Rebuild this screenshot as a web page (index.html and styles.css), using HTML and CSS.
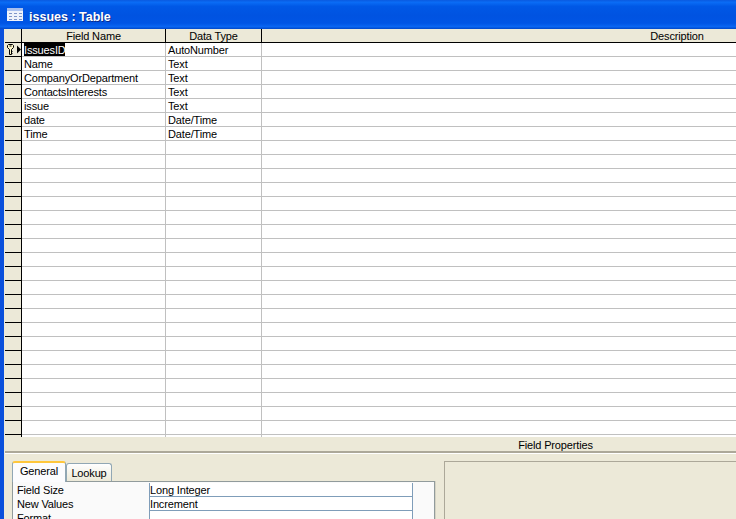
FILE: index.html
```html
<!DOCTYPE html>
<html lang="en">
<head>
<meta charset="utf-8">
<title>issues : Table</title>
<link rel="stylesheet" href="styles.css">
</head>
<body>
<div class="window">
  <div class="titlebar">
    <svg class="table-icon" width="16" height="13" viewBox="0 0 16 13">
      <rect width="16" height="13" fill="#eef2fb"/>
      <rect width="16" height="3" fill="#a9c0ee"/>
      <path d="M2 5h3v1H2zM7 5h3v1H7zM12 5h3v1h-3zM2 8h3v1H2zM7 8h3v1H7zM12 8h3v1h-3zM2 11h3v1H2zM7 11h3v1H7zM12 11h3v1h-3z" fill="#7f95c8"/>
    </svg>
    <span class="title">issues : Table</span>
  </div>
  <div class="client">
    <div class="grid-area">
      <div class="row head">
        <div class="sel"></div>
        <div class="c name">Field Name</div>
        <div class="c type">Data Type</div>
        <div class="c desc">Description</div>
      </div>
      <div class="row first">
        <div class="sel">
          <svg width="16" height="13" viewBox="0 0 16 13">
            <path d="M3.500 1.500h4l1 1v2l-2 2v5h-2v-5l-2-2v-2z" fill="#fdf6c8" stroke="#000"/>
            <path d="M4.500 3h2" stroke="#000" fill="none"/>
            <path d="M6.500 8.500h1M6.500 10.500h1" stroke="#000" fill="none"/>
            <path d="M12 2.500l4 4-4 4z" fill="#000"/>
          </svg>
        </div>
        <div class="c name"><span class="hl">IssuesID</span></div>
        <div class="c type">AutoNumber</div>
        <div class="c desc"></div>
      </div>
      <div class="row"><div class="sel"></div><div class="c name">Name</div><div class="c type">Text</div><div class="c desc"></div></div>
      <div class="row"><div class="sel"></div><div class="c name">CompanyOrDepartment</div><div class="c type">Text</div><div class="c desc"></div></div>
      <div class="row"><div class="sel"></div><div class="c name">ContactsInterests</div><div class="c type">Text</div><div class="c desc"></div></div>
      <div class="row"><div class="sel"></div><div class="c name">issue</div><div class="c type">Text</div><div class="c desc"></div></div>
      <div class="row"><div class="sel"></div><div class="c name">date</div><div class="c type">Date/Time</div><div class="c desc"></div></div>
      <div class="row"><div class="sel"></div><div class="c name">Time</div><div class="c type">Date/Time</div><div class="c desc"></div></div>
      <div class="row"><div class="sel"></div><div class="c name"></div><div class="c type"></div><div class="c desc"></div></div>
      <div class="row"><div class="sel"></div><div class="c name"></div><div class="c type"></div><div class="c desc"></div></div>
      <div class="row"><div class="sel"></div><div class="c name"></div><div class="c type"></div><div class="c desc"></div></div>
      <div class="row"><div class="sel"></div><div class="c name"></div><div class="c type"></div><div class="c desc"></div></div>
      <div class="row"><div class="sel"></div><div class="c name"></div><div class="c type"></div><div class="c desc"></div></div>
      <div class="row"><div class="sel"></div><div class="c name"></div><div class="c type"></div><div class="c desc"></div></div>
      <div class="row"><div class="sel"></div><div class="c name"></div><div class="c type"></div><div class="c desc"></div></div>
      <div class="row"><div class="sel"></div><div class="c name"></div><div class="c type"></div><div class="c desc"></div></div>
      <div class="row"><div class="sel"></div><div class="c name"></div><div class="c type"></div><div class="c desc"></div></div>
      <div class="row"><div class="sel"></div><div class="c name"></div><div class="c type"></div><div class="c desc"></div></div>
      <div class="row"><div class="sel"></div><div class="c name"></div><div class="c type"></div><div class="c desc"></div></div>
      <div class="row"><div class="sel"></div><div class="c name"></div><div class="c type"></div><div class="c desc"></div></div>
      <div class="row"><div class="sel"></div><div class="c name"></div><div class="c type"></div><div class="c desc"></div></div>
      <div class="row"><div class="sel"></div><div class="c name"></div><div class="c type"></div><div class="c desc"></div></div>
      <div class="row"><div class="sel"></div><div class="c name"></div><div class="c type"></div><div class="c desc"></div></div>
      <div class="row"><div class="sel"></div><div class="c name"></div><div class="c type"></div><div class="c desc"></div></div>
      <div class="row"><div class="sel"></div><div class="c name"></div><div class="c type"></div><div class="c desc"></div></div>
      <div class="row"><div class="sel"></div><div class="c name"></div><div class="c type"></div><div class="c desc"></div></div>
      <div class="row"><div class="sel"></div><div class="c name"></div><div class="c type"></div><div class="c desc"></div></div>
      <div class="row"><div class="sel"></div><div class="c name"></div><div class="c type"></div><div class="c desc"></div></div>
      <div class="row"><div class="sel"></div><div class="c name"></div><div class="c type"></div><div class="c desc"></div></div>
      <div class="row last"><div class="sel"></div><div class="c name"></div><div class="c type"></div><div class="c desc"></div></div>
    </div>
    <div class="props-head">Field Properties</div>
    <div class="props">
      <div class="tabs-wrap">
        <div class="tabs">
          <div class="tab active">General</div>
          <div class="tab">Lookup</div>
        </div>
        <div class="panel">
          <div class="prow"><div class="plabel">Field Size</div><div class="pval">Long Integer</div><div class="pedge"></div></div>
          <div class="prow"><div class="plabel">New Values</div><div class="pval">Increment</div><div class="pedge"></div></div>
          <div class="prow"><div class="plabel">Format</div><div class="pval"></div><div class="pedge"></div></div>
        </div>
      </div>
      <div class="help"></div>
    </div>
  </div>
</div>
</body>
</html>
```
FILE: styles.css
```css
* { box-sizing: border-box; }
html, body { margin: 0; padding: 0; }
body {
  width: 736px;
  height: 519px;
  overflow: hidden;
  font-family: "Liberation Sans", Arial, sans-serif;
  font-size: 11px;
  letter-spacing: -0.15px;
  color: #000;
  background: #ece9d8;
}
.window { width: 736px; height: 519px; display: flex; flex-direction: column; overflow: hidden; }
.titlebar {
  height: 29px;
  flex: none;
  display: flex;
  align-items: center;
  gap: 6px;
  padding: 0 0 0 7px;
  background: linear-gradient(180deg, #0a5ae0 0%, #0a6cf5 8%, #0058e6 22%, #0053e1 55%, #0055e5 80%, #0a66f2 92%, #0047c8 100%);
}
.table-icon { flex: none; }
.title {
  color: #fff;
  font-weight: 700;
  font-size: 12.500px;
  letter-spacing: 0;
  margin-top: 4px;
  text-shadow: 1px 1px 0 #0a2a8c;
}
.client { flex: 1; min-height: 0; border-left: 4px solid #0a50dc; padding-left: 1px; background: #ece9d8; display: flex; flex-direction: column; }
.grid-area { height: 408px; flex: none; overflow: hidden; }
.row { display: flex; height: 14px; background: #fff; }
.sel { width: 17px; flex: none; background: #ece9d8; border-right: 1px solid #000; border-bottom: 1px solid #000; height: 14px; line-height: 0; }
.c { height: 14px; line-height: 13px; padding-top: 1px; border-bottom: 1px solid #c0c0c0; border-right: 1px solid #c0c0c0; padding-left: 2px; white-space: nowrap; overflow: hidden; }
.name { width: 144px; flex: none; }
.type { width: 96px; flex: none; }
.desc { flex: 1; border-right: 0; }
.head .c, .head .sel { background: #ece9d8; border-bottom: 1px solid #000; border-right: 1px solid #000; text-align: center; padding-left: 0; }
.head .desc { border-right: 0; padding-left: 356px; }
.hl { background: #000; color: #fff; display: block; width: 41px; height: 13px; margin-top: -1px; padding-top: 1px; line-height: 12px; }
.last .sel { border-bottom: 0; }
.last .c { border-bottom: 0; }
.props-head { height: 16px; flex: none; text-align: center; line-height: 16px; padding-left: 370px; border-bottom: 2px solid #aca899; }
.props { flex: 1; min-height: 0; display: flex; border-top: 1px solid #fff; padding: 7px 0 0 7px; gap: 9px; align-items: flex-start; overflow: hidden; }
.tabs-wrap { width: 423px; flex: none; }
.tabs { display: flex; align-items: flex-end; height: 20px; }
.tab { height: 18px; width: 46px; border: 1px solid #91a7b4; border-bottom: 0; border-radius: 3px 3px 0 0; background: linear-gradient(#fff, #ece9d8); text-align: center; line-height: 18px; }
.tab.active { height: 21px; width: 54px; border-top: 2px solid #ffc73c; background: #fcfcfe; margin-bottom: -1px; position: relative; z-index: 1; line-height: 17px; }
.panel { border: 1px solid #919b9c; border-bottom: 0; background: #fafafa; height: 60px; box-shadow: 1px 0 0 #d6d3c4; padding: 1px 0 0 4px; }
.prow { display: flex; height: 14px; }
.plabel { width: 132px; flex: none; line-height: 14px; }
.pval { width: 264px; flex: none; background: #fff; border-left: 1px solid #7f9db9; border-right: 1px solid #7f9db9; border-bottom: 1px solid #7f9db9; line-height: 15px; }
.pedge { flex: 1; }
.help { flex: 1; height: 80px; border: 1px solid #aca899; border-right: 0; background: #ece9d8; }
```
